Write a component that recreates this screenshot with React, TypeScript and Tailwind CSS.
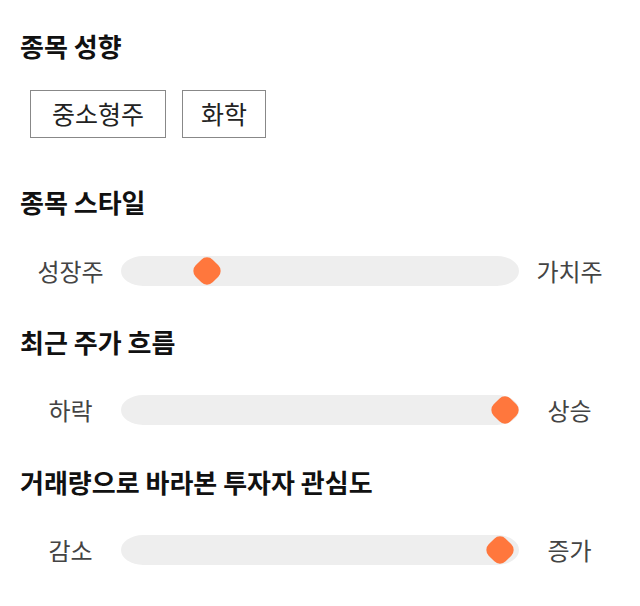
import React from "react";

const font = { fontFamily: '"Noto Sans CJK KR", "Noto Sans", sans-serif' };

function Heading({ children }: { children: React.ReactNode }) {
  return (
    <h2 className="h-8 text-[26px] font-bold leading-8 text-[#111]">
      {children}
    </h2>
  );
}

function Thumb() {
  return (
    <div className="h-6 w-6 rotate-45 rounded-[8px] bg-[#ff773d]" />
  );
}

function Slider({
  left,
  right,
  pos,
}: {
  left: string;
  right: string;
  pos: number;
}) {
  return (
    <div className="flex h-[50px] items-center">
      <div className="w-[101px] text-center text-[24px] text-[#444]">{left}</div>
      <div className="relative h-[30px] flex-1 rounded-[22px/15px] bg-[#eeeeee]">
        <div
          className="absolute top-1/2 -translate-x-1/2 -translate-y-1/2"
          style={{ left: `${pos}%` }}
        >
          <Thumb />
        </div>
      </div>
      <div className="w-[101px] text-center text-[24px] text-[#444]">{right}</div>
    </div>
  );
}

export default function App() {
  return (
    <div className="min-h-screen bg-white px-5 pt-[30px]" style={font}>
      {/* 종목 성향 */}
      <Heading>종목 성향</Heading>
      <div className="mt-7 flex gap-4 pl-[10px]">
        <span className="flex h-[48px] items-center border border-[#888] px-[21px] text-[25px] text-[#222]">
          중소형주
        </span>
        <span className="flex h-[48px] items-center border border-[#888] px-[18px] text-[25px] text-[#222]">
          화학
        </span>
      </div>

      <div className="mt-[48px]">
        <Heading>종목 스타일</Heading>
        <div className="mt-7">
          <Slider left="성장주" right="가치주" pos={21.6} />
        </div>
      </div>

      <div className="mt-[30px]">
        <Heading>최근 주가 흐름</Heading>
        <div className="mt-[27px]">
          <Slider left="하락" right="상승" pos={96.5} />
        </div>
      </div>

      <div className="mt-[31px]">
        <Heading>거래량으로 바라본 투자자 관심도</Heading>
        <div className="mt-[27px]">
          <Slider left="감소" right="증가" pos={95.2} />
        </div>
      </div>
    </div>
  );
}
